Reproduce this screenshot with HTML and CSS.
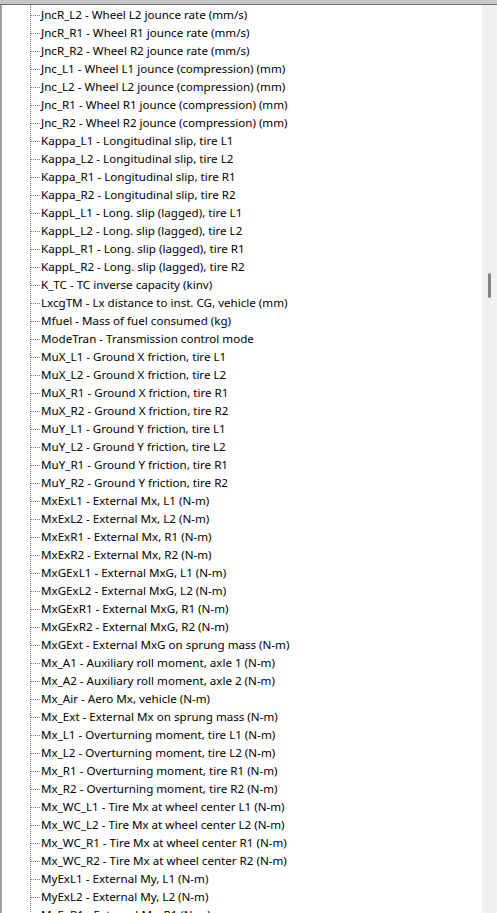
FILE: index.html
```html
<!DOCTYPE html>
<html>
<head>
<meta charset="utf-8">
<link rel="stylesheet" href="styles.css">
</head>
<body>
<div class="window">
  <div class="topband"></div>
  <div class="body">
    <div class="tree">
      <ul class="items">
        <li>JncR_L2 - Wheel L2 jounce rate (mm/s)</li>
        <li>JncR_R1 - Wheel R1 jounce rate (mm/s)</li>
        <li>JncR_R2 - Wheel R2 jounce rate (mm/s)</li>
        <li>Jnc_L1 - Wheel L1 jounce (compression) (mm)</li>
        <li>Jnc_L2 - Wheel L2 jounce (compression) (mm)</li>
        <li>Jnc_R1 - Wheel R1 jounce (compression) (mm)</li>
        <li>Jnc_R2 - Wheel R2 jounce (compression) (mm)</li>
        <li>Kappa_L1 - Longitudinal slip, tire L1</li>
        <li>Kappa_L2 - Longitudinal slip, tire L2</li>
        <li>Kappa_R1 - Longitudinal slip, tire R1</li>
        <li>Kappa_R2 - Longitudinal slip, tire R2</li>
        <li>KappL_L1 - Long. slip (lagged), tire L1</li>
        <li>KappL_L2 - Long. slip (lagged), tire L2</li>
        <li>KappL_R1 - Long. slip (lagged), tire R1</li>
        <li>KappL_R2 - Long. slip (lagged), tire R2</li>
        <li>K_TC - TC inverse capacity (kinv)</li>
        <li>LxcgTM - Lx distance to inst. CG, vehicle (mm)</li>
        <li>Mfuel - Mass of fuel consumed (kg)</li>
        <li>ModeTran - Transmission control mode</li>
        <li>MuX_L1 - Ground X friction, tire L1</li>
        <li>MuX_L2 - Ground X friction, tire L2</li>
        <li>MuX_R1 - Ground X friction, tire R1</li>
        <li>MuX_R2 - Ground X friction, tire R2</li>
        <li>MuY_L1 - Ground Y friction, tire L1</li>
        <li>MuY_L2 - Ground Y friction, tire L2</li>
        <li>MuY_R1 - Ground Y friction, tire R1</li>
        <li>MuY_R2 - Ground Y friction, tire R2</li>
        <li>MxExL1 - External Mx, L1 (N-m)</li>
        <li>MxExL2 - External Mx, L2 (N-m)</li>
        <li>MxExR1 - External Mx, R1 (N-m)</li>
        <li>MxExR2 - External Mx, R2 (N-m)</li>
        <li>MxGExL1 - External MxG, L1 (N-m)</li>
        <li>MxGExL2 - External MxG, L2 (N-m)</li>
        <li>MxGExR1 - External MxG, R1 (N-m)</li>
        <li>MxGExR2 - External MxG, R2 (N-m)</li>
        <li>MxGExt - External MxG on sprung mass (N-m)</li>
        <li>Mx_A1 - Auxiliary roll moment, axle 1 (N-m)</li>
        <li>Mx_A2 - Auxiliary roll moment, axle 2 (N-m)</li>
        <li>Mx_Air - Aero Mx, vehicle (N-m)</li>
        <li>Mx_Ext - External Mx on sprung mass (N-m)</li>
        <li>Mx_L1 - Overturning moment, tire L1 (N-m)</li>
        <li>Mx_L2 - Overturning moment, tire L2 (N-m)</li>
        <li>Mx_R1 - Overturning moment, tire R1 (N-m)</li>
        <li>Mx_R2 - Overturning moment, tire R2 (N-m)</li>
        <li>Mx_WC_L1 - Tire Mx at wheel center L1 (N-m)</li>
        <li>Mx_WC_L2 - Tire Mx at wheel center L2 (N-m)</li>
        <li>Mx_WC_R1 - Tire Mx at wheel center R1 (N-m)</li>
        <li>Mx_WC_R2 - Tire Mx at wheel center R2 (N-m)</li>
        <li>MyExL1 - External My, L1 (N-m)</li>
        <li>MyExL2 - External My, L2 (N-m)</li>
        <li>MyExR1 - External My, R1 (N-m)</li>
      </ul>
    </div>
    <div class="scrollbar">
      <div class="thumb"></div>
    </div>
  </div>
</div>
</body>
</html>
```
FILE: styles.css
```css
html, body {
  margin: 0;
  padding: 0;
  background: #ffffff;
}
.window {
  width: 497px;
  height: 913px;
  display: flex;
  flex-direction: column;
  overflow: hidden;
}
.topband {
  height: 4px;
  background: #c6c6c6;
  border-bottom: 1px solid #6e6e6e;
  flex: none;
}
.body {
  flex: 1;
  display: flex;
  min-height: 0;
}
.tree {
  flex: 1;
  border-left: 2px solid #a0a0a0;
  overflow: hidden;
  position: relative;
}
.items {
  list-style: none;
  margin: 0 0 0 28px;
  padding: 1px 0 0 0;
  border-left: 1px dotted #7a7a7a;
  font-family: "Noto Sans", "Open Sans", sans-serif;
  font-size: 11.6px;
  color: #000;
}
.items li {
  height: 18px;
  line-height: 18px;
  display: flex;
  align-items: center;
  white-space: nowrap;
}
.items li::before {
  content: "";
  width: 9px;
  border-top: 1px dotted #7a7a7a;
  margin-right: 1px;
  flex: none;
}
.scrollbar {
  width: 15px;
  flex: none;
  background: #f0f0f0;
  padding-top: 268px;
  box-sizing: border-box;
  display: flex;
  justify-content: center;
}
.thumb {
  width: 3px;
  height: 25px;
  border-radius: 2px;
  background: #858585;
}
```
